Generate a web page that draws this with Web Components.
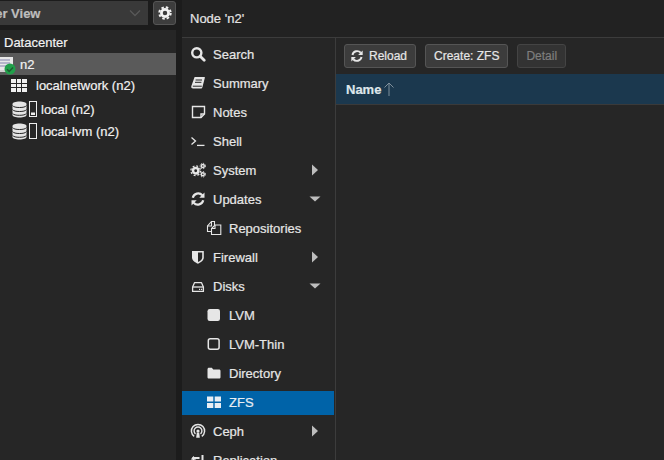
<!DOCTYPE html>
<html>
<head>
<meta charset="utf-8">
<title>Node n2</title>
<style>
html, body { margin: 0; height: 100%; overflow: hidden; background: #1c1c1c; }
body { font: 13px "Liberation Sans", Arial, sans-serif; color: #f2f2f2; -webkit-text-stroke: 0.2px; }
</style>
</head>
<body>
<pve-app>
    <pve-tree slot="left" view="Server View">
        <tree-row icon="dc" depth="0">Datacenter</tree-row>
        <tree-row icon="node" depth="-1" selected>n2</tree-row>
        <tree-row icon="network" depth="1">localnetwork (n2)</tree-row>
        <tree-row icon="storage" depth="1" fill="low">local (n2)</tree-row>
        <tree-row icon="storage" depth="1" fill="none">local-lvm (n2)</tree-row>
    </pve-tree>
    <pve-content slot="right" title="Node 'n2'">
        <nav-item slot="nav" icon="search">Search</nav-item>
        <nav-item slot="nav" icon="book">Summary</nav-item>
        <nav-item slot="nav" icon="note">Notes</nav-item>
        <nav-item slot="nav" icon="shell">Shell</nav-item>
        <nav-item slot="nav" icon="cogs" arrow="right">System</nav-item>
        <nav-item slot="nav" icon="refresh" arrow="down">Updates</nav-item>
        <nav-item slot="nav" icon="files" sub>Repositories</nav-item>
        <nav-item slot="nav" icon="shield" arrow="right">Firewall</nav-item>
        <nav-item slot="nav" icon="hdd" arrow="down">Disks</nav-item>
        <nav-item slot="nav" icon="square" sub>LVM</nav-item>
        <nav-item slot="nav" icon="square-o" sub>LVM-Thin</nav-item>
        <nav-item slot="nav" icon="folder" sub>Directory</nav-item>
        <nav-item slot="nav" icon="th" sub selected>ZFS</nav-item>
        <nav-item slot="nav" icon="ceph" arrow="right">Ceph</nav-item>
        <nav-item slot="nav" icon="retweet">Replication</nav-item>
        <tool-button slot="tools" icon="refresh">Reload</tool-button>
        <tool-button slot="tools">Create: ZFS</tool-button>
        <tool-button slot="tools" disabled>Detail</tool-button>
    </pve-content>
</pve-app>
<script>
// 16x16 icon shapes, all drawn in currentColor
const ICONS = {
    search: '<circle cx="6.8" cy="6.8" r="4.6" fill="none" stroke="currentColor" stroke-width="2.4"/><path d="M10.2 10.2l4 4" stroke="currentColor" stroke-width="2.8" stroke-linecap="round"/>',
    book: '<path d="M4.6 2h9.6c.6 0 .8.4.6 1l-2.4 9.2c-.2.9-.8 1.3-1.6 1.3H3c-1.2 0-2-1-1.7-2.3z" fill="currentColor"/><path d="M5.6 5h6.4M5 7.3h6.4" stroke="#262626" stroke-width="1"/><path d="M2.8 11.2h9" stroke="#262626" stroke-width="1"/>',
    note: '<path d="M2.5 2.5h12v7.5l-3.5 3.5h-8.5z" fill="none" stroke="currentColor" stroke-width="1.4"/><path d="M11 13.500v-3.500h3.500" fill="none" stroke="currentColor" stroke-width="1.4"/>',
    shell: '<path d="M1.500 4.500l4 3.500-4 3.500" fill="none" stroke="currentColor" stroke-width="1.300"/><path d="M7 12.400h7.500" stroke="currentColor" stroke-width="1.300"/>',
    cogs: '<g fill="none" stroke="currentColor"><circle cx="5.700" cy="8.700" r="2.700" stroke-width="2.500"/><circle cx="5.700" cy="8.700" r="4.800" stroke-width="1.300" stroke-dasharray="1.900 1.870"/><circle cx="12.800" cy="4" r="1.500" stroke-width="1.400"/><circle cx="12.800" cy="4" r="2.700" stroke-width="1" stroke-dasharray="1.300 1.200"/><circle cx="12.800" cy="12.300" r="1.500" stroke-width="1.400"/><circle cx="12.800" cy="12.300" r="2.700" stroke-width="1" stroke-dasharray="1.300 1.200"/></g>',
    refresh: '<path d="M2.800 6.800A5.500 5.500 0 0 1 12.300 4.300" fill="none" stroke="currentColor" stroke-width="2.200"/><path d="M14.500 1.600v5.200h-5.200z" fill="currentColor"/><path d="M13.200 9.200A5.500 5.500 0 0 1 3.700 11.700" fill="none" stroke="currentColor" stroke-width="2.200"/><path d="M1.500 14.400v-5.200h5.200z" fill="currentColor"/>',
    files: '<g fill="none" stroke="currentColor" stroke-width="1.100"><path d="M8.500 5V1.500H5.500L1.500 6v5.500H5.500"/><path d="M5.500 1.500V6H1.500"/><path d="M9 5H14.800V14.500H5.500V8.500z"/><path d="M9 5V8.500H5.500"/></g>',
    shield: '<path d="M2 2h11.800v6.500c0 3-3 4.800-5.900 6.300-2.900-1.500-5.900-3.300-5.900-6.300z" fill="currentColor"/><path d="M8 3.600h4.200v4.900c0 2.200-2.200 3.500-4.200 4.600z" fill="#262626"/>',
    hdd: '<path d="M2.600 9l2-4.400h6.800l2 4.400v4.400H2.600z" fill="none" stroke="currentColor" stroke-width="1.300" stroke-linejoin="round"/><path d="M2.600 9h10.800" stroke="currentColor" stroke-width="1.300"/><path d="M9 11.300h1.200M11 11.300h1.200" stroke="currentColor" stroke-width="1.200"/>',
    square: '<rect x="1.500" y="2" width="12.500" height="12" rx="2.200" fill="currentColor"/>',
    'square-o': '<rect x="2.300" y="2.800" width="10.800" height="10.400" rx="2" fill="none" stroke="currentColor" stroke-width="1.500"/>',
    folder: '<path d="M1.500 4.300c0-.9.600-1.500 1.400-1.500h2.900l1.500 1.700h5.800c.8 0 1.400.6 1.400 1.400v6.300c0 .8-.6 1.400-1.400 1.400H2.900c-.8 0-1.400-.6-1.400-1.400z" fill="currentColor"/>',
    th: '<path d="M1 2.500h6.300v5H1zM8.700 2.500H15v5H8.700zM1 8.900h6.300v5H1zM8.700 8.900H15v5H8.700z" fill="currentColor"/>',
    ceph: '<g fill="none" stroke="currentColor"><path d="M4.200 13.400A6.600 6.600 0 1 1 11.800 13.400" stroke-width="1.500"/><path d="M5.500 10.900A3.900 3.900 0 1 1 10.500 10.900" stroke-width="1.400"/></g><circle cx="8" cy="8" r="1.600" fill="currentColor"/><path d="M6.800 9.500h2.400l.6 5.200h-3.600z" fill="currentColor"/>',
    retweet: '<path d="M3.500 13V6h6M12.500 3v7h-6" fill="none" stroke="currentColor" stroke-width="2"/><path d="M.8 7.500h5.400L3.500 4zM9.800 8.500h5.400L12.500 12z" fill="currentColor"/>'
};

class PveIcon extends HTMLElement {
    constructor() {
        super();
        this.attachShadow({ mode: 'open' });
        const size = this.getAttribute('size') || 16;
        this.shadowRoot.innerHTML = `<style>
            :host { display: inline-flex; flex: none; width: ${size}px; height: ${size}px; }
            svg { display: block; width: 100%; height: 100%; }
        </style><svg viewBox="0 0 16 16">${ICONS[this.getAttribute('name')] || ''}</svg>`;
    }
}
customElements.define('pve-icon', PveIcon);

class PveApp extends HTMLElement {
    constructor() {
        super();
        this.attachShadow({ mode: 'open' });
        this.shadowRoot.innerHTML = `<style>
            :host { display: grid; grid-template-columns: 176px 1fr; column-gap: 6px; height: 460px; overflow: hidden; }
        </style><slot name="left"></slot><slot name="right"></slot>`;
    }
}
customElements.define('pve-app', PveApp);

class PveTree extends HTMLElement {
    constructor() {
        super();
        this.attachShadow({ mode: 'open' });
        this.shadowRoot.innerHTML = `<style>
            :host { display: flex; flex-direction: column; height: 460px; overflow: hidden; }
            .top { display: flex; gap: 5px; height: 24px; margin-top: 1px; flex: none; }
            .select { flex: 1; min-width: 0; display: flex; align-items: center; background: #393939; overflow: hidden; font-weight: bold; color: #bdbdbd; font-size: 13px; }
            .select span { margin-left: -33px; white-space: nowrap; flex: 1; }
            .select svg { width: 12px; height: 8px; margin-right: 7px; flex: none; }
            .gear { width: 21px; flex: none; display: flex; align-items: center; justify-content: center; background: #3d3d3d; border: 1px solid #555; border-radius: 3px; color: #f2f2f2; }
            .rows { flex: 1; margin-top: 5px; padding-top: 1px; background: #262626; }
        </style>
        <div class="top">
            <div class="select"><span>Server View</span><svg viewBox="0 0 12 8"><path d="M1 1.500l5 5 5-5" fill="none" stroke="#585858" stroke-width="1.300"/></svg></div>
            <div class="gear"><svg width="14" height="14" viewBox="0 0 14 14"><circle cx="7" cy="7" r="3.600" fill="none" stroke="currentColor" stroke-width="2.700"/><circle cx="7" cy="7" r="5.700" fill="none" stroke="currentColor" stroke-width="2" stroke-dasharray="2.500 2"/></svg></div>
        </div>
        <div class="rows"><slot></slot></div>`;
    }
}
customElements.define('pve-tree', PveTree);

class TreeRow extends HTMLElement {
    constructor() {
        super();
        this.attachShadow({ mode: 'open' });
        const icon = this.getAttribute('icon');
        const fill = this.getAttribute('fill');
        let art = '';
        if (icon === 'node') {
            art = `<span class="node"><svg width="17" height="17" viewBox="0 0 17 17"><rect x="1" y="1" width="15" height="13" fill="#e8e8e8"/><path d="M3 4h10M3 7h10M3 10h10" stroke="#a5a5c0" stroke-width="1.500"/><rect x="3" y="14" width="11" height="2" fill="#cfcfcf"/></svg>
                <svg class="ok" width="12" height="12" viewBox="0 0 12 12"><circle cx="6" cy="6" r="5.500" fill="#21a04a"/><path d="M3 6.200l2.200 2.200 3.800-4" fill="none" stroke="#1e5c33" stroke-width="1.500"/></svg></span>`;
        } else if (icon === 'network') {
            art = `<svg class="net" width="16" height="13" viewBox="0 0 16 13"><rect width="16" height="13" fill="#f0f0f0"/><path d="M0 4.500h16M0 8.500h16M5.500 0v13M10.500 0v13" stroke="#262626" stroke-width="1"/></svg>`;
        } else if (icon === 'storage') {
            art = `<svg class="db" width="15" height="17" viewBox="0 0 15 17"><path d="M.500 3c0-1.500 3-2.500 7-2.500s7 1 7 2.500v11c0 1.500-3 2.500-7 2.500s-7-1-7-2.500z" fill="#e4e4e4"/><path d="M.500 4.500c1 1.500 3.500 2 7 2s6-.5 7-2M.500 8.500c1 1.500 3.500 2 7 2s6-.5 7-2M.500 12.300c1 1.500 3.500 2 7 2s6-.5 7-2" fill="none" stroke="#262626" stroke-width="1"/></svg>
                <svg class="bar" width="8" height="16" viewBox="0 0 8 16"><rect x=".5" y=".5" width="7" height="15" fill="none" stroke="#ededed"/>${fill === 'low' ? '<rect x="2" y="11.500" width="4" height="2.500" fill="#ededed"/>' : ''}</svg>`;
        }
        this.shadowRoot.innerHTML = `<style>
            :host { display: flex; align-items: center; box-sizing: border-box; height: 22px; white-space: nowrap; color: #f2f2f2; }
            :host([selected]) { background: #5a5a5a; }
            :host([icon="dc"]) { padding-left: 4px; }
            :host([icon="node"]) { padding-left: 0; }
            :host([icon="network"]) { padding: 0 0 1px 11px; }
            :host([icon="storage"]) { padding: 2px 0 0 12px; }
            .node { position: relative; display: block; width: 23px; height: 17px; margin-left: -3px; }
            .node svg { display: block; }
            .ok { position: absolute; left: 7px; top: 7px; }
            .net { margin-right: 9px; }
            .db { margin-right: 2px; }
            .bar { margin-right: 4px; }
        </style>${art}<slot></slot>`;
    }
}
customElements.define('tree-row', TreeRow);

class PveContent extends HTMLElement {
    constructor() {
        super();
        this.attachShadow({ mode: 'open' });
        this.shadowRoot.innerHTML = `<style>
            :host { display: flex; flex-direction: column; height: 460px; overflow: hidden; min-width: 0; background: #262626; }
            header { height: 37px; flex: none; display: flex; align-items: center; padding-left: 8px; background: #222; border-bottom: 1px solid #3c3c3c; font-size: 13px; color: #e4e4e4; }
            .body { flex: 1; display: grid; grid-template-columns: 154px 1fr; min-height: 0; }
            nav { overflow: hidden; border-right: 1px solid #3c3c3c; padding-top: 5px; display: flex; flex-direction: column; gap: 5px; }
            .main { display: flex; flex-direction: column; min-width: 0; }
            .tools { height: 36px; flex: none; display: flex; align-items: center; gap: 9px; padding: 0 8px; box-sizing: border-box; }
            .grid-head { height: 30px; flex: none; display: flex; align-items: center; gap: 2px; padding-left: 10px; background: #1b384e; border-bottom: 1px solid #3a3a3a; font-weight: bold; color: #dfe6eb; font-size: 13px; }
            .grid-head svg { display: block; }
        </style>
        <header>${this.getAttribute('title')}</header>
        <div class="body">
            <nav><slot name="nav"></slot></nav>
            <div class="main">
                <div class="tools"><slot name="tools"></slot></div>
                <div class="grid-head"><span>Name</span><svg width="12" height="16" viewBox="0 0 12 16"><path d="M6 15V2M1.500 6.500L6 2l4.500 4.500" fill="none" stroke="#7f8f9b" stroke-width="1"/></svg></div>
            </div>
        </div>`;
    }
}
customElements.define('pve-content', PveContent);

class NavItem extends HTMLElement {
    constructor() {
        super();
        this.attachShadow({ mode: 'open' });
        const arrow = this.getAttribute('arrow');
        let caret = '';
        if (arrow === 'right') caret = '<svg class="caret" width="12" height="12" viewBox="0 0 12 12"><path d="M3 .5l6 5.500-6 5.500z" fill="#bdbdbd"/></svg>';
        if (arrow === 'down') caret = '<svg class="caret" width="12" height="12" viewBox="0 0 12 12"><path d="M.5 3.500h11L6 8.500z" fill="#bdbdbd"/></svg>';
        this.shadowRoot.innerHTML = `<style>
            :host { display: flex; align-items: center; flex: none; box-sizing: border-box; height: 24px; padding: 0 0 2px 8px; color: #e6e6e6; white-space: nowrap; }
            :host([sub]) { padding-left: 24px; }
            :host([selected]) { background: #0063a8; color: #e8eef4; margin-right: 1px; }
            pve-icon { margin-right: 7px; }
            span { flex: 1; }
            .caret { margin-right: 14px; }
        </style><pve-icon name="${this.getAttribute('icon')}"></pve-icon><span><slot></slot></span>${caret}`;
    }
}
customElements.define('nav-item', NavItem);

class ToolButton extends HTMLElement {
    constructor() {
        super();
        this.attachShadow({ mode: 'open' });
        const icon = this.getAttribute('icon');
        this.shadowRoot.innerHTML = `<style>
            :host { display: inline-flex; align-items: center; height: 24px; box-sizing: border-box; padding: 0 8px; gap: 5px; background: #3c3c3c; border: 1px solid #555; border-radius: 3px; color: #e6e6e6; font-size: 12px; white-space: nowrap; }
            :host([icon]) { padding-left: 5px; }
            :host([disabled]) { background: #333; border-color: #444; color: #7e7e7e; }
        </style>${icon ? `<pve-icon name="${icon}" size="14"></pve-icon>` : ''}<slot></slot>`;
    }
}
customElements.define('tool-button', ToolButton);
</script>
</body>
</html>
